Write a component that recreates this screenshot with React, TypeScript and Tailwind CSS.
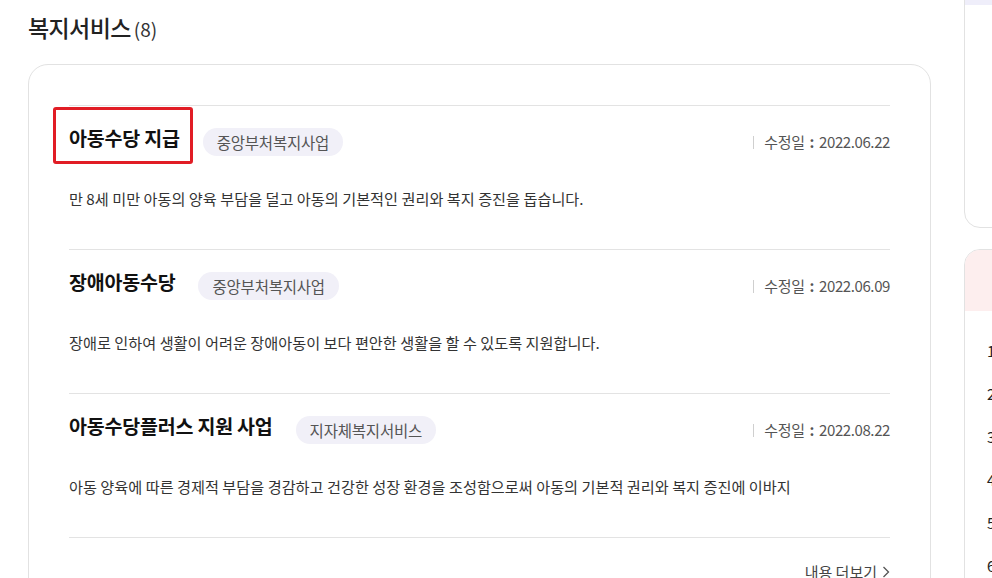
const font = { fontFamily: '"Noto Sans CJK KR", "Noto Sans", sans-serif' };

const services = [
  {
    title: '아동수당 지급',
    tag: '중앙부처복지사업',
    date: '2022.06.22',
    desc: '만 8세 미만 아동의 양육 부담을 덜고 아동의 기본적인 권리와 복지 증진을 돕습니다.',
    marked: true,
  },
  {
    title: '장애아동수당',
    tag: '중앙부처복지사업',
    date: '2022.06.09',
    desc: '장애로 인하여 생활이 어려운 장애아동이 보다 편안한 생활을 할 수 있도록 지원합니다.',
  },
  {
    title: '아동수당플러스 지원 사업',
    tag: '지자체복지서비스',
    date: '2022.08.22',
    desc: '아동 양육에 따른 경제적 부담을 경감하고 건강한 성장 환경을 조성함으로써 아동의 기본적 권리와 복지 증진에 이바지',
  },
];

function ServiceItem({ item }: { item: (typeof services)[number] }) {
  return (
    <li className="relative border-t border-[#e3e3e3] pt-[22px] pb-[41px]">
      {item.marked && (
        <div className="absolute left-[-16px] top-[1px] w-[140px] h-[57px] border-[3px] border-[#e11d25] rounded-[3px]" />
      )}
      <div className="flex items-center h-[28px]">
        <h3 className="text-[19.5px] leading-[24px] font-bold text-[#111] tracking-[-0.2px] mb-[8px]">{item.title}</h3>
        <span className="ml-[23px] h-[28px] px-[14px] rounded-full bg-[#f1f0f8] text-[15.5px] leading-[28px] text-[#555] tracking-[-0.2px]">
          {item.tag}
        </span>
        <div className="ml-auto flex items-center text-[15px] text-[#555] tracking-[-0.4px]">
          <span className="w-px h-[13px] bg-[#cfcfcf] mr-[10px]" />
          <span>수정일</span>
          <span className="ml-[5px] mr-[5px] font-bold">:</span>
          <span>{item.date}</span>
        </div>
      </div>
      <p className="mt-[32px] text-[15.2px] leading-[20px] text-[#333]">{item.desc}</p>
    </li>
  );
}

export default function App() {
  return (
    <div className="w-[992px] h-[578px] overflow-hidden bg-white flex" style={font}>
      <main className="w-[903px] ml-[28px] shrink-0">
        <h2 className="pt-[13px] h-[64px] flex items-baseline text-[#222]">
          <span className="text-[23px] leading-[28px] font-medium tracking-[-0.6px]">복지서비스</span>
          <span className="ml-[3px] text-[19px] leading-[28px] text-[#333]">(8)</span>
        </h2>
        <section className="border border-[#e2e2e2] rounded-[20px] px-10 pt-10 pb-10">
          <ul>
            {services.map((s) => (
              <ServiceItem key={s.title} item={s} />
            ))}
          </ul>
          <div className="border-t border-[#e3e3e3] pt-[24px] flex justify-end">
            <a className="flex items-center gap-[5px] text-[15px] leading-[20px] text-[#444]">
              내용 더보기
              <svg width="8" height="12" viewBox="0 0 8 12" fill="none" stroke="#555" strokeWidth="1.3">
                <path d="M1.5 1l5 5-5 5" />
              </svg>
            </a>
          </div>
        </section>
      </main>

      <aside className="ml-[33px] w-[300px] shrink-0">
        <div className="-mt-[20px] h-[248px] border border-[#e2e2e2] rounded-[16px] overflow-hidden">
          <div className="h-[24px] bg-[#efeefa]" />
        </div>
        <div className="mt-[21px] border border-[#e2e2e2] rounded-t-[16px] overflow-hidden">
          <div className="h-[61px] bg-[#fdeeee]" />
          <ol className="pt-[18px] pl-[22px] text-[15px] text-[#222]">
            {[1, 2, 3, 4, 5, 6].map((n) => (
              <li key={n} className="h-[43px] leading-[43px]">
                {n}
              </li>
            ))}
          </ol>
        </div>
      </aside>
    </div>
  );
}
